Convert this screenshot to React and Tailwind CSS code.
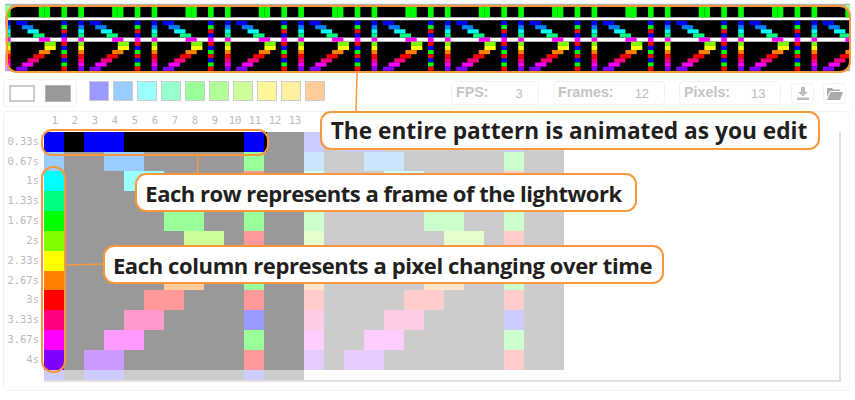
const hues = { b: '#0000ff', a: '#0080ff', c: '#00ffff', s: '#00ff80', g: '#00ff00', l: '#80ff00', y: '#ffff00', o: '#ff8000', r: '#ff0000', p: '#ff0080', m: '#ff00ff', v: '#8000ff' };
const light1 = { b: '#9999ff', a: '#99ccff', c: '#99ffff', s: '#99ffcc', g: '#99ff99', l: '#ccff99', y: '#ffff99', o: '#ffcc99', r: '#ff9999', p: '#ff99cc', m: '#ff99ff', v: '#cc99ff' };
const light2 = { b: '#ccccff', a: '#cce5ff', c: '#ccffff', s: '#ccffe5', g: '#ccffcc', l: '#e5ffcc', y: '#ffffcc', o: '#ffe5cc', r: '#ffcccc', p: '#ffcce5', m: '#ffccff', v: '#e5ccff' };

// row: [colour of col 1, diagonal colour, first diagonal col (0-based), colour of col 11]
const rows = [
  ['b', 'b', 2, 'b'], ['a', 'a', 3, 'g'], ['c', 'c', 4, 'r'], ['s', 's', 5, 'b'],
  ['g', 'g', 6, 'g'], ['l', 'l', 7, 'r'], ['y', 'y', 7, 'b'], ['o', 'o', 6, 'g'],
  ['r', 'r', 5, 'r'], ['p', 'p', 4, 'b'], ['m', 'm', 3, 'g'], ['v', 'v', 2, 'r'],
];

function cellKey(row, col) {
  const [first, diag, start, eleven] = rows[row];
  if (col === 0) return first;
  if (col === 10) return eleven;
  if (col === start || col === start + 1) return diag;
  return null;
}

function stripRow(i) {
  const r = rows[i];
  return i === 4 ? ['m', 'm', 6, 'm'] : r;
}

const TILE = 73.32;
const CW = 5.64;
const RH = 4.15;

function Tile({ x, palette }) {
  const rects = [];
  rows.forEach((_, i) => {
    const [first, diag, start, eleven] = stripRow(i);
    const y = 21 + i * RH;
    rects.push(<rect key={`a${i}`} x={x} y={y} width={CW} height={RH} fill={palette[first]} />);
    rects.push(<rect key={`b${i}`} x={x + start * CW} y={y} width={CW * 2} height={RH} fill={palette[diag]} />);
    rects.push(<rect key={`c${i}`} x={x + 10 * CW} y={y} width={CW} height={RH} fill={palette[eleven]} />);
  });
  [0, 6, 7, 10].forEach((c) => {
    rects.push(<rect key={`t${c}`} x={x + c * CW} y={5} width={CW} height={12.3} fill={palette.g} />);
  });
  return <g>{rects}</g>;
}

function Strip() {
  const tiles = Array.from({ length: 12 }, (_, i) => 5 + i * TILE);
  return (
    <svg width="855" height="73" viewBox="0 0 855 73" className="block">
      <defs>
        <clipPath id="strip-clip">
          <rect x="7" y="6" width="843" height="66" rx="9" />
        </clipPath>
        <clipPath id="strip-all">
          <rect x="5" y="3.5" width="845" height="68" />
        </clipPath>
      </defs>
      <g clipPath="url(#strip-all)">
        <rect x="5" y="3.5" width="845" height="68" fill="#b3b3b3" />
        {tiles.map((x) => <Tile key={x} x={x} palette={light1} />)}
      </g>
      <g clipPath="url(#strip-clip)">
        <rect x="5" y="3.5" width="845" height="68" fill="#000" />
        <rect x="5" y="17.3" width="845" height="2.9" fill="#fff" />
        <rect x="5" y="37.6" width="845" height="4.1" fill="#fff" />
        {tiles.map((x) => <Tile key={x} x={x} palette={hues} />)}
      </g>
    </svg>
  );
}

const swatches = ['#9999ff', '#99ccff', '#99ffff', '#99ffcc', '#99ff99', '#b2ff99', '#ccff99', '#fff599'];

function Stat({ label, value, width, gap }) {
  return (
    <div className={`h-6 flex items-center rounded border border-[#f2f2f2] pl-[4px] text-[14.3px] font-bold text-[#c4c4c4] ${width}`}>
      <span>{label}</span>
      <span className={`font-normal text-[13px] text-[#bbbbbb] pt-[2px] ${gap}`}>{value}</span>
    </div>
  );
}

function Toolbar() {
  return (
    <div className="flex items-start h-[38px] pl-[3px] pt-[6px]" style={{ fontFamily: '"Liberation Sans", sans-serif' }}>
      <div className="w-[74px] h-[28px] flex items-center justify-between pl-[5px] pr-[5px] rounded border border-[#f2f2f2]">
        <div className="w-[26px] h-[17px] border-2 border-[#cccccc] bg-white" />
        <div className="w-[26px] h-[17px] border border-[#b5b5b5] bg-[#999999]" />
      </div>
      <div className="flex gap-[4px] ml-[12px] mt-[2px]">
        {swatches.map((c) => (
          <div key={c} className="w-[20px] h-[20px] border border-[#cccccc]" style={{ backgroundColor: c }} />
        ))}
        <div className="w-[20px] h-[20px] border border-[#cccccc] bg-[#fff0a0] bg-[radial-gradient(#f3c27f_0.6px,transparent_0.7px)] bg-[length:2px_2px]" />
        <div className="w-[20px] h-[20px] border border-[#cccccc] bg-[#ffcc99]" />
      </div>
      <div className="flex gap-[14px] ml-[126px] mt-[2px]">
        <Stat label="FPS:" value="3" width="w-[88px]" gap="ml-[27px]" />
        <Stat label="Frames:" value="12" width="w-[112px]" gap="ml-[21px]" />
        <Stat label="Pixels:" value="13" width="w-[102px]" gap="ml-[21px]" />
      </div>
      <div className="flex gap-[9px] ml-[10px] mt-[4px]">
        <button className="w-[23px] h-[21px] rounded border border-[#f2f2f2] flex items-center justify-center">
          <svg width="12" height="13" viewBox="0 0 12 13" fill="#bdbdbd">
            <path d="M4 0h4v5h3L6 9.500 1 5h3zM0 10.500h12V13H0z" />
          </svg>
        </button>
        <button className="w-[23px] h-[21px] rounded border border-[#f2f2f2] flex items-center justify-center">
          <svg width="16" height="13" viewBox="0 0 16 13" fill="#ababab">
            <path d="M0 1h5l1.500 1.500H13V4H3L0 10zM3.500 5H16l-3 8H0z" />
          </svg>
        </button>
      </div>
    </div>
  );
}

const labels = ['0.33s', '0.67s', '1s', '1.33s', '1.67s', '2s', '2.33s', '2.67s', '3s', '3.33s', '3.67s', '4s'];

function Grid() {
  const cells = [];
  for (let r = 0; r < 12; r++) {
    for (let c = 0; c < 26; c++) {
      const col = c % 13;
      const key = cellKey(r, col);
      let bg = c < 13 ? '#999999' : '#cccccc';
      if (key) bg = c < 13 ? light1[key] : light2[key];
      if (r === 0 && c < 13) bg = key ? hues[key] : c < 11 ? '#000000' : '#999999';
      if (c === 0 && r > 1) bg = hues[key];
      cells.push(<div key={`${r}-${c}`} style={{ backgroundColor: bg }} />);
    }
  }
  const last = [];
  for (let c = 0; c < 13; c++) {
    const key = cellKey(0, c);
    last.push(<div key={c} style={{ backgroundColor: key ? light2[key] : '#cccccc' }} />);
  }
  return (
    <div className="flex ml-[3px] w-[847px] h-[280px] rounded border border-[#f2f2f2] text-[10.5px] text-[#bbbbbb]" style={{ fontFamily: '"DejaVu Sans Mono", monospace' }}>
      <div className="w-[40px] pt-[19.7px] pr-[5px] grid grid-rows-[repeat(12,19.85px)] content-start">
        {labels.map((l) => <div key={l} className="flex items-center justify-end">{l}</div>)}
      </div>
      <div className="w-[797px]">
        <div className="grid grid-cols-[repeat(13,20px)] h-[19.7px] pt-[1px] pl-[1px] leading-[14px] text-center">
          {Array.from({ length: 13 }, (_, i) => <div key={i}>{i + 1}</div>)}
        </div>
        <div className="border-b-2 border-r-2 border-[#e0e0e0]">
          <div className="grid w-[520px] grid-cols-[repeat(26,20px)] grid-rows-[repeat(12,19.85px)] border-r border-[#e0e0e0]">{cells}</div>
          <div className="grid w-[260px] h-[10px] grid-cols-[repeat(13,20px)]">{last}</div>
        </div>
      </div>
    </div>
  );
}

function Callout({ className, children }) {
  return (
    <div className={`absolute h-[39px] flex items-center justify-center pt-[2px] rounded-[11px] border-2 border-[#f8973c] bg-white font-bold text-[#231f20] whitespace-nowrap ${className}`} style={{ fontFamily: '"Open Sans", sans-serif' }}>
      {children}
    </div>
  );
}

export default function App() {
  return (
    <div className="relative w-[855px] h-[400px] bg-white overflow-hidden">
      <Strip />
      <Toolbar />
      <Grid />

      <div className="absolute left-[264px] top-[132px] w-[3px] h-[20px] bg-black" />
      <div className="absolute left-[6px] top-[5px] w-[845px] h-[68px] rounded-[11px] border-2 border-[#f8973c]" />
      <div className="absolute left-[41px] top-[129px] w-[228px] h-[27px] rounded-[11px] border-2 border-[#f8973c]" />
      <div className="absolute left-[41px] top-[166px] w-[25px] h-[207px] rounded-[12px] border-2 border-[#f8973c]" />

      <svg className="absolute left-0 top-0 pointer-events-none" width="855" height="400" fill="none" stroke="#f8973c" strokeWidth="1.5">
        <path d="M357 73 L356 112" />
        <path d="M198 156 L197.500 174" />
        <path d="M66 265 L105 264" />
      </svg>

      <Callout className="left-[320px] top-[111px] w-[500px] pr-[2px] text-[22.7px]">The entire pattern is animated as you edit</Callout>
      <Callout className="left-[135px] top-[173px] w-[502px] pr-[5px] text-[22px] tracking-[-0.48px]">Each row represents a frame of the lightwork</Callout>
      <Callout className="left-[103px] top-[245px] w-[561px] pr-[2px] text-[22px] tracking-[-0.39px]">Each column represents a pixel changing over time</Callout>
    </div>
  );
}
